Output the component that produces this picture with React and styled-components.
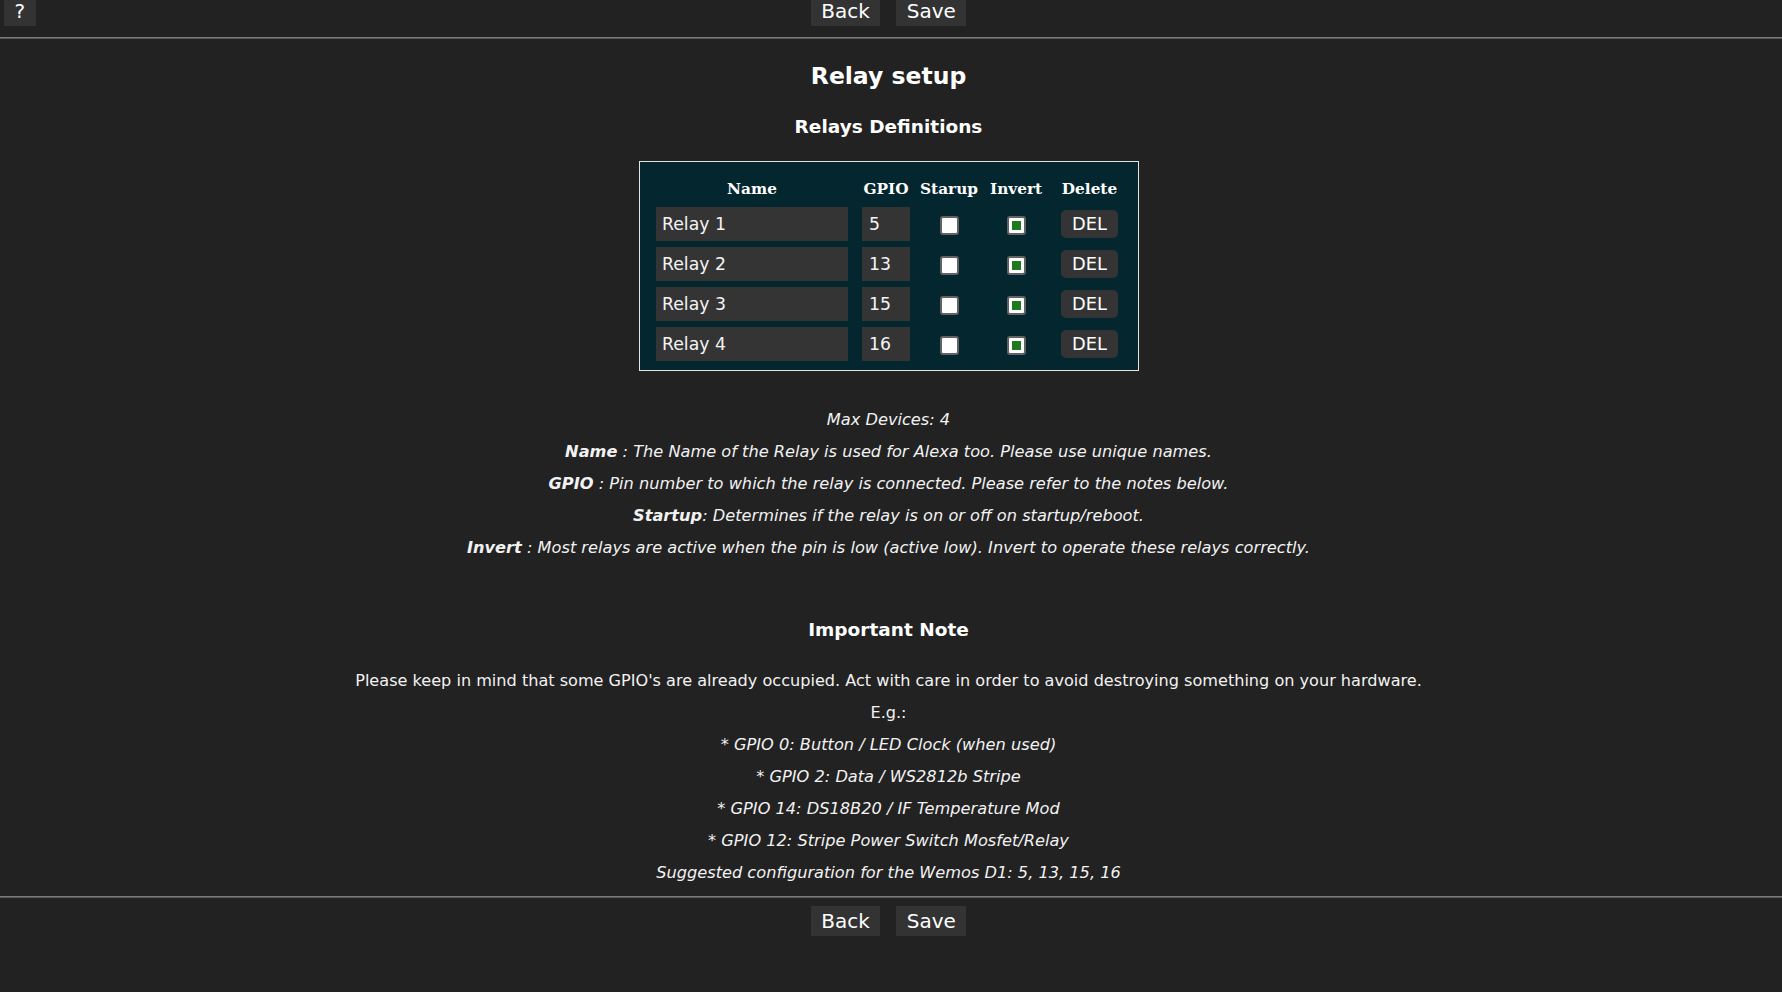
import React from "react";
import styled, { createGlobalStyle } from "styled-components";

const GlobalStyle = createGlobalStyle`
  html, body { margin: 0; padding: 0; background: #222222; }
  body {
    color: #f2f2f2;
    font-family: "DejaVu Sans", Verdana, sans-serif;
    font-size: 16px;
    overflow: hidden;
  }
`;

const Page = styled.div`
  display: flex;
  flex-direction: column;
  align-items: center;
  box-sizing: border-box;
  width: 100%;
  min-height: 992px;
  padding-right: 5px;
`;

const Bar = styled.div`
  display: grid;
  grid-template-columns: 1fr auto 1fr;
  align-items: start;
  width: 100%;
  margin-top: ${(p) => p.$top || 0}px;
`;

const BarCenter = styled.div`
  display: flex;
  gap: 16px;
  grid-column: 2;
`;

const BarLeft = styled.div`
  grid-column: 1;
  grid-row: 1;
  padding-left: 4px;
`;

const Button = styled.button`
  height: 30px;
  padding: 1px 10.5px 0;
  border: none;
  border-radius: 0;
  background: #333333;
  color: #ffffff;
  font-family: "DejaVu Sans", Verdana, sans-serif;
  font-size: 20px;
  line-height: 29px;
  cursor: pointer;
`;

const Divider = styled.div`
  align-self: stretch;
  margin-right: -5px;
  height: 0;
  border-top: 1px solid #7a7a7a;
  border-bottom: 1px solid #575757;
  margin-top: ${(p) => p.$top}px;
`;

const Title = styled.h1`
  margin: 22.5px 0 0;
  font-size: 23.5px;
  line-height: 28px;
  font-weight: bold;
  color: #ffffff;
`;

const SubTitle = styled.h3`
  margin: ${(p) => p.$top}px 0 0;
  font-size: 18.5px;
  line-height: 22px;
  font-weight: bold;
  color: #ffffff;
`;

const RelayTable = styled.div`
  margin-top: 23px;
  box-sizing: border-box;
  width: 500px;
  padding: 15px 7px 9px;
  background: #04262e;
  border: 1px solid #e4e4e4;
  display: grid;
  grid-template-columns: 211px 57px 69px 65px 82px;
  grid-auto-rows: 34px;
  grid-template-rows: 24px;
  row-gap: 6px;
  justify-items: center;
  align-items: center;
`;

const HeadCell = styled.div`
  font-family: "DejaVu Serif", Georgia, serif;
  font-weight: bold;
  font-size: 15.3px;
  line-height: 24px;
  color: #ffffff;
  white-space: nowrap;
`;

const TextInput = styled.input`
  box-sizing: border-box;
  width: ${(p) => p.$w}px;
  height: 34px;
  margin: 0;
  padding: 0 0 0 ${(p) => p.$pad}px;
  border: none;
  outline: none;
  background: #343434;
  color: #f4f4f4;
  font-family: "DejaVu Sans", Verdana, sans-serif;
  font-size: 17.3px;
`;

const Check = styled.span`
  box-sizing: border-box;
  width: 19px;
  height: 19px;
  margin-top: 4px;
  border: 2px solid #626262;
  border-radius: 3px;
  background: #ffffff;
  display: grid;
  place-items: center;
`;

const CheckMark = styled.span`
  width: 9px;
  height: 9px;
  background: #1d7a1f;
`;

const DelButton = styled.button`
  width: 57px;
  height: 28px;
  padding: 0;
  border: none;
  border-radius: 5px;
  background: #343434;
  color: #ffffff;
  font-family: "DejaVu Sans", Verdana, sans-serif;
  font-size: 17.8px;
  line-height: 28px;
`;

const Notes = styled.div`
  display: flex;
  flex-direction: column;
  align-items: center;
  gap: 12px;
  margin-top: ${(p) => p.$top}px;
`;

const Line = styled.p`
  margin: 0;
  font-size: ${(p) => (p.$italic ? 16.2 : 16.1)}px;
  line-height: 20px;
  font-style: ${(p) => (p.$italic ? "italic" : "normal")};
  text-align: center;
  white-space: nowrap;
`;

const Strong = styled.b`
  font-weight: bold;
`;

const relays = [
  { name: "Relay 1", gpio: "5" },
  { name: "Relay 2", gpio: "13" },
  { name: "Relay 3", gpio: "15" },
  { name: "Relay 4", gpio: "16" },
];

function ButtonBar({ top, help }) {
  return (
    <Bar $top={top}>
      {help && (
        <BarLeft>
          <Button>?</Button>
        </BarLeft>
      )}
      <BarCenter>
        <Button>Back</Button>
        <Button>Save</Button>
      </BarCenter>
    </Bar>
  );
}

export default function App() {
  return (
    <>
      <GlobalStyle />
      <Page>
        <ButtonBar top={-4} help />
        <Divider $top={11} />
        <Title>Relay setup</Title>
        <SubTitle $top={26}>Relays Definitions</SubTitle>
        <RelayTable>
          <HeadCell>Name</HeadCell>
          <HeadCell>GPIO</HeadCell>
          <HeadCell>Starup</HeadCell>
          <HeadCell>Invert</HeadCell>
          <HeadCell>Delete</HeadCell>
          {relays.map((r) => (
            <React.Fragment key={r.name}>
              <TextInput $w={192} $pad={6} defaultValue={r.name} />
              <TextInput $w={48} $pad={7} defaultValue={r.gpio} />
              <Check />
              <Check>
                <CheckMark />
              </Check>
              <DelButton>DEL</DelButton>
            </React.Fragment>
          ))}
        </RelayTable>
        <Notes $top={39.5}>
          <Line $italic>Max Devices: 4</Line>
          <Line $italic>
            <Strong>Name</Strong> : The Name of the Relay is used for Alexa too. Please use unique names.
          </Line>
          <Line $italic>
            <Strong>GPIO</Strong> : Pin number to which the relay is connected. Please refer to the notes below.
          </Line>
          <Line $italic>
            <Strong>Startup</Strong>: Determines if the relay is on or off on startup/reboot.
          </Line>
          <Line $italic>
            <Strong>Invert</Strong> : Most relays are active when the pin is low (active low). Invert to operate these relays correctly.
          </Line>
        </Notes>
        <SubTitle $top={60.5}>Important Note</SubTitle>
        <Notes $top={30.5}>
          <Line>
            Please keep in mind that some GPIO's are already occupied. Act with care in order to avoid destroying something on your hardware.
          </Line>
          <Line>E.g.:</Line>
          <Line $italic>* GPIO 0: Button / LED Clock (when used)</Line>
          <Line $italic>* GPIO 2: Data / WS2812b Stripe</Line>
          <Line $italic>* GPIO 14: DS18B20 / IF Temperature Mod</Line>
          <Line $italic>* GPIO 12: Stripe Power Switch Mosfet/Relay</Line>
          <Line $italic>Suggested configuration for the Wemos D1: 5, 13, 15, 16</Line>
        </Notes>
        <Divider $top={12.5} />
        <ButtonBar top={8} />
      </Page>
    </>
  );
}
